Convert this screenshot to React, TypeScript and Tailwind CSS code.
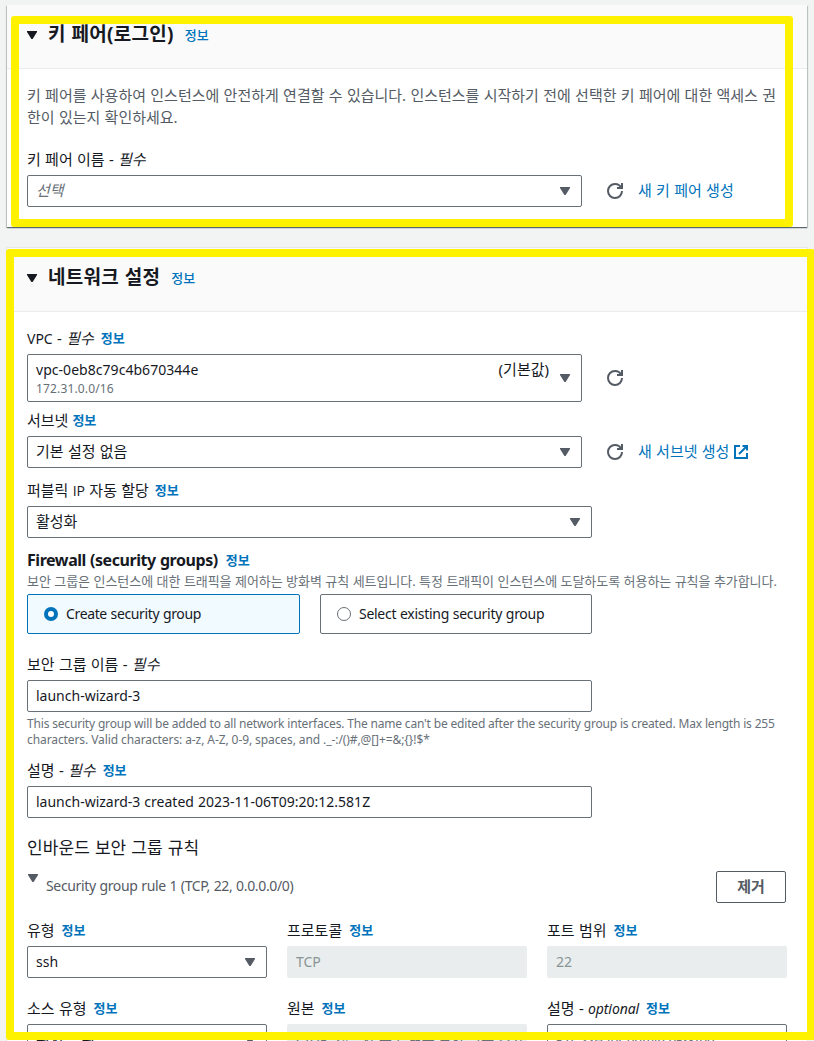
import type { ReactNode } from "react";

const RULE_FIELDS = [
  { label: "유형", value: "ssh", kind: "select" },
  { label: "프로토콜", value: "TCP", kind: "disabled" },
  { label: "포트 범위", value: "22", kind: "disabled" },
];

function Caret({ className = "text-[#545b64]" }: { className?: string }) {
  return (
    <svg width="10" height="8" viewBox="0 0 10 8" className={`shrink-0 ${className}`}>
      <path d="M0 0h10v1L5.6 8H4.4L0 1z" fill="currentColor" />
    </svg>
  );
}

function RefreshIcon() {
  return (
    <svg width="16" height="16" viewBox="0 0 16 16" fill="none" stroke="#545b64" strokeWidth="2" className="shrink-0">
      <path d="M10 5h5V0" />
      <path d="M15 8a6.96 6.96 0 0 1-7 7 6.96 6.96 0 0 1-7-7 6.96 6.96 0 0 1 7-7 6.87 6.87 0 0 1 6.3 4" />
    </svg>
  );
}

function ExternalIcon() {
  return (
    <svg width="14" height="14" viewBox="1 1 14 14" fill="none" stroke="#0073bb" strokeWidth="2" className="shrink-0">
      <path d="M9.5 2H14v4.5" />
      <path d="M6 10l8-8" />
      <path d="M14 9.05V14H2V2h5" />
    </svg>
  );
}

function Info({ className = "font-bold" }: { className?: string }) {
  return <a className={`text-[13px] text-[#0073bb] ${className}`}>정보</a>;
}

function Label({ children, info, gap = "ml-[7px]" }: { children: ReactNode; info?: boolean; gap?: string }) {
  return (
    <div className="flex h-5 items-center whitespace-nowrap text-[15px] leading-5">
      <span>{children}</span>
      {info && <Info className={`font-bold ${gap}`} />}
    </div>
  );
}

function SelectBox({ children, className = "" }: { children: ReactNode; className?: string }) {
  return (
    <div className={`flex h-8 items-center justify-between rounded-[2px] border border-[#687078] bg-white pr-[11px] pl-2 ${className}`}>
      {children}
      <Caret />
    </div>
  );
}

function TextBox({ children }: { children: ReactNode }) {
  return (
    <div className="mt-[6px] flex h-8 w-[565px] items-center rounded-[2px] border border-[#687078] bg-white px-2 text-sm">
      {children}
    </div>
  );
}

function Header({ title, className }: { title: string; className: string }) {
  return (
    <div className={`flex items-start border-b border-[#eaeded] bg-[#fafafa] pl-5 ${className}`}>
      <div className="flex h-6 items-center whitespace-nowrap">
        <Caret className="mt-[2px] text-[#16191f]" />
        <h2 className="ml-[11px] text-[19px] font-bold tracking-[0.3px]">{title}</h2>
        <Info className="mt-1 ml-[11px] font-medium" />
      </div>
    </div>
  );
}

export default function App() {
  return (
    <div className="relative h-[1041px] w-[814px] overflow-hidden bg-[#f2f3f3] pt-[5px] pl-[7px] font-['Noto_Sans','Noto_Sans_CJK_KR',sans-serif] text-[#16191f] [word-spacing:0.4px]">
      <section className="h-[222px] w-[800px] bg-white shadow-[0_1px_1px_0_rgba(0,28,36,0.5),1px_1px_1px_0_rgba(0,28,36,0.15),-1px_1px_1px_0_rgba(0,28,36,0.15)]">
        <Header title="키 페어(로그인)" className="h-16 pt-[17px]" />
        <div className="px-5 pt-[15px]">
          <p className="text-[15px] leading-[22px] whitespace-nowrap text-[#545b64]">
            키 페어를 사용하여 인스턴스에 안전하게 연결할 수 있습니다. 인스턴스를 시작하기 전에 선택한 키 페어에 대한 액세스 권
            <br />
            한이 있는지 확인하세요.
          </p>
          <div className="mt-[21px]">
            <Label>
              키 페어 이름 - <i>필수</i>
            </Label>
          </div>
          <div className="mt-[6px] flex items-center">
            <SelectBox className="w-[555px]">
              <i className="-mt-0.5 text-[15px] text-[#687078]">선택</i>
            </SelectBox>
            <span className="ml-[25px]"><RefreshIcon /></span>
            <a className="-mt-0.5 ml-[15px] text-[15px] text-[#0073bb]">새 키 페어 생성</a>
          </div>
        </div>
      </section>

      <section className="mt-[21px] h-[820px] w-[800px] bg-white shadow-[0_0_1px_1px_#e4e8e8]">
        <Header title="네트워크 설정" className="h-16 pt-[17px]" />
        <div className="px-5 pt-4">
          <Label info gap="ml-[7px]">
            <span className="text-sm">VPC</span> - <i>필수</i>
          </Label>
          <div className="mt-[6px] flex items-center">
            <SelectBox className="h-12 w-[555px]">
              <div className="flex flex-1 justify-between pr-[11px]">
                <div>
                  <div className="text-sm leading-[22px] tracking-[0.04px]">vpc-0eb8c79c4b670344e</div>
                  <div className="text-xs leading-4 tracking-[0.15px] text-[#687078]">172.31.0.0/16</div>
                </div>
                <span className="-mt-px text-[15px] leading-[22px]">(기본값)</span>
              </div>
            </SelectBox>
            <span className="ml-[25px]"><RefreshIcon /></span>
          </div>

          <div className="mt-2">
            <Label info gap="ml-1">서브넷</Label>
          </div>
          <div className="mt-[6px] flex items-center">
            <SelectBox className="w-[555px]">
              <span className="-mt-0.5 text-[15px]">기본 설정 없음</span>
            </SelectBox>
            <span className="ml-[25px]"><RefreshIcon /></span>
            <a className="-mt-0.5 mr-[5px] ml-[15px] text-[15px] text-[#0073bb]">새 서브넷 생성</a>
            <ExternalIcon />
          </div>

          <div className="mt-3">
            <Label info gap="ml-[6px]">
              퍼블릭 <span className="font-['Open_Sans',sans-serif] text-sm">IP</span> 자동 할당
            </Label>
          </div>
          <SelectBox className="mt-[6px] w-[565px]">
            <span className="-mt-0.5 text-[15px]">활성화</span>
          </SelectBox>

          <div className="mt-3 flex h-[22px] items-center text-base font-bold">
            <span className="-mt-0.5 tracking-[-0.44px]">Firewall (security groups)</span>
            <Info className="ml-2 font-bold" />
          </div>
          <p className="mt-px h-4 text-[13px] leading-4 tracking-[-0.06px] whitespace-nowrap text-[#687078] [word-spacing:0.2px]">
            보안 그룹은 인스턴스에 대한 트래픽을 제어하는 방화벽 규칙 세트입니다. 특정 트래픽이 인스턴스에 도달하도록 허용하는 규칙을 추가합니다.
          </p>
          <div className="mt-[5px] flex w-[565px] gap-5 text-sm">
            <div className="flex h-10 w-[273px] items-center gap-2 rounded-[2px] border border-[#0073bb] bg-[#f1faff] pl-4">
              <span className="h-[14px] w-[14px] rounded-full border-[4.5px] border-[#0073bb] bg-white" />
              <span className="tracking-[-0.36px]">Create security group</span>
            </div>
            <div className="flex h-10 w-[272px] items-center gap-2 rounded-[2px] border border-[#687078] pl-4">
              <span className="h-[14px] w-[14px] rounded-full border border-[#687078] bg-white" />
              <span className="tracking-[-0.28px]">Select existing security group</span>
            </div>
          </div>

          <div className="mt-5">
            <Label>
              보안 그룹 이름 - <i>필수</i>
            </Label>
          </div>
          <TextBox>launch-wizard-3</TextBox>
          <p className="mt-1 text-xs leading-4 whitespace-nowrap text-[#687078] [word-spacing:0px]">
            <span className="tracking-[-0.177px]">
              This security group will be added to all network interfaces. The name can't be edited after the security group is created. Max length is 255
            </span>
            <br />
            <span className="tracking-[-0.09px]">
              {"characters. Valid characters: a-z, A-Z, 0-9, spaces, and ._-:/()#,@[]+=&;{}!$*"}
            </span>
          </p>

          <div className="mt-3">
            <Label info gap="ml-[7px]">
              설명 - <i>필수</i>
            </Label>
          </div>
          <TextBox>launch-wizard-3 created 2023-11-06T09:20:12.581Z</TextBox>

          <h3 className="mt-[18px] h-6 text-[17px] leading-6 tracking-[0.1px]">인바운드 보안 그룹 규칙</h3>
          <div className="mt-[11px] flex h-8 w-[759px] items-center">
            <Caret className="mb-[18px] ml-px text-[#545b64]" />
            <span className="-mt-0.5 ml-2 text-sm tracking-[-0.35px] text-[#545b64]">Security group rule 1 (TCP, 22, 0.0.0.0/0)</span>
            <button className="ml-auto h-8 w-[70px] rounded-[2px] border border-[#545b64] pb-0.5 text-[15px] font-bold text-[#545b64]">
              제거
            </button>
          </div>

          <div className="mt-[17px] grid grid-cols-[240px_240px_240px] gap-x-5 gap-y-5">
            {RULE_FIELDS.map((field) => (
              <div key={field.label}>
                <Label info>{field.label}</Label>
                {field.kind === "select" ? (
                  <SelectBox className="mt-[6px]">
                    <span className="text-sm">{field.value}</span>
                  </SelectBox>
                ) : (
                  <div className="mt-[6px] flex h-8 items-center rounded-[2px] bg-[#eaeded] px-[9px] text-sm text-[#879596]">
                    {field.value}
                  </div>
                )}
              </div>
            ))}
            <div>
              <Label info>소스 유형</Label>
              <SelectBox className="mt-[6px]">
                <span className="-mt-0.5 text-[15px]">위치 무관</span>
              </SelectBox>
            </div>
            <div>
              <Label info>원본</Label>
              <div className="mt-[6px] flex h-8 items-center rounded-[2px] bg-[#eaeded] px-[9px] text-sm whitespace-nowrap text-[#687078]">
                CIDR, 접두사 목록 또는 보안 그룹 추가
              </div>
            </div>
            <div>
              <Label info>
                설명 - <i className="text-sm tracking-[-0.1px]">optional</i>
              </Label>
              <div className="mt-[6px] flex h-8 items-center rounded-[2px] border border-[#687078] px-2 text-sm tracking-[-0.4px] text-[#687078] italic">
                e.g. SSH for admin desktop
              </div>
            </div>
          </div>
        </div>
      </section>

      {/* highlight frames over both panels */}
      <div className="pointer-events-none absolute top-4 left-[11px] h-[211px] w-[782px] rounded-[3px] border-8 border-[#fff200]" />
      <div className="pointer-events-none absolute top-[249px] left-[6px] h-[791px] w-[809px] rounded-[3px] border-8 border-[#fff200]" />
    </div>
  );
}
